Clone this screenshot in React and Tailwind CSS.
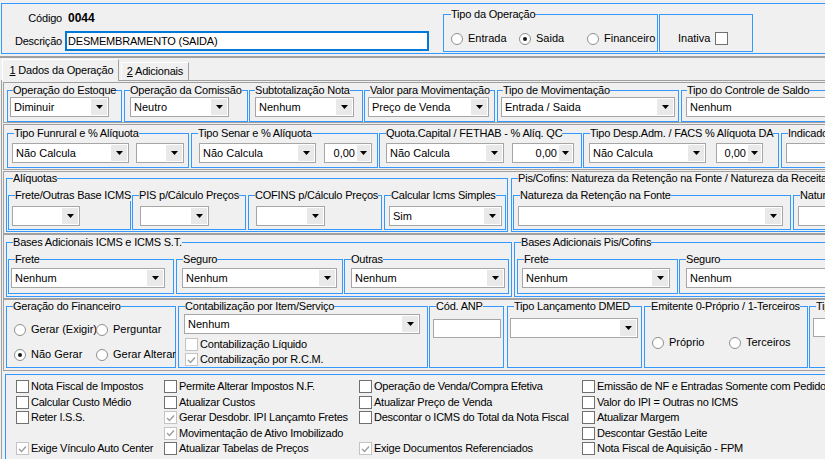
import React from "react";

function Arrow() {
  return (
    <svg width="7" height="4" viewBox="0 0 7 4">
      <path d="M0 0h7L3.5 4z" fill="#000" />
    </svg>
  );
}

// combobox look: white field, grey arrow button on the right
function Combo({ value = "", className = "", right = false }) {
  return (
    <div className={"flex h-[20px] shrink-0 items-center border border-[#a6a6a6] bg-white " + className}>
      <span className={"min-w-0 flex-1 overflow-hidden whitespace-nowrap pl-[3px] pr-[2px] " + (right ? "text-right" : "")}>
        {value}
      </span>
      <span className={"mr-[1px] flex h-[16px] shrink-0 items-center justify-center bg-[#e9e9e9] " + (right ? "w-[13px]" : "w-[16px]")}>
        <Arrow />
      </span>
    </div>
  );
}

function Field({ className = "" }) {
  return <div className={"shrink-0 border border-[#a6a6a6] bg-white " + className} />;
}

function Radio({ checked }) {
  return (
    <span className="flex h-[12px] w-[12px] shrink-0 items-center justify-center rounded-full border border-[#8f8f8f] bg-white">
      {checked && <span className="h-[4px] w-[4px] rounded-full bg-[#1a1a1a]" />}
    </span>
  );
}

function RadioItem({ label, checked, className = "" }) {
  return (
    <div className={"flex h-[13px] shrink-0 items-center gap-[5px] whitespace-nowrap " + className}>
      <Radio checked={checked} />
      <span>{label}</span>
    </div>
  );
}

function Check({ checked, disabled }) {
  return (
    <span
      className={
        "flex h-[13px] w-[13px] shrink-0 items-center justify-center border bg-white " +
        (disabled ? "border-[#c4c4c4]" : "border-[#707070]")
      }
    >
      {checked && (
        <svg width="9" height="8" viewBox="0 0 9 8">
          <path d="M1 4l2.5 2.5L8 1.5" fill="none" stroke={disabled ? "#9d9d9d" : "#222"} strokeWidth="1.4" />
        </svg>
      )}
    </span>
  );
}

// Delphi style group box
function Group({ title, className = "", legend = "ml-[6px]", children }) {
  return (
    <fieldset className={"min-w-0 shrink-0 border border-[#3399ff] " + className}>
      {title && <legend className={"whitespace-nowrap leading-[12px] tracking-[-0.2px] " + legend}>{title}</legend>}
      {children}
    </fieldset>
  );
}

const checks = [
  ["Nota Fiscal de Impostos"],
  ["Calcular Custo Médio"],
  ["Reter I.S.S."],
  null,
  ["Exige Vínculo Auto Center", true],
  ["Permite Alterar Impostos N.F."],
  ["Atualizar Custos"],
  ["Gerar Desdobr. IPI Lançamto Fretes", true],
  ["Movimentação de Ativo Imobilizado", true],
  ["Atualizar Tabelas de Preços"],
  ["Operação de Venda/Compra Efetiva"],
  ["Atualizar Preço de Venda"],
  ["Descontar o ICMS do Total da Nota Fiscal"],
  null,
  ["Exige Documentos Referenciados", true],
  ["Emissão de NF e Entradas Somente com Pedido"],
  ["Valor do IPI = Outras no ICMS"],
  ["Atualizar Margem"],
  ["Descontar Gestão Leite"],
  ["Nota Fiscal de Aquisição - FPM"],
];

export default function App() {
  return (
    <div className="h-[459px] w-[825px] overflow-hidden bg-[#f0f0f0] font-['Liberation_Sans',Arial,sans-serif] text-[11px] leading-[13px] text-black">
      {/* HEADER */}
      <div className="ml-[1px] mt-[3px] flex h-[51px] w-[840px] border border-[#3399ff]">
        <div className="w-[441px] shrink-0 pt-[7px] tracking-[-0.2px]">
          <div className="flex h-[14px] items-center">
            <span className="w-[60px] text-right">Código</span>
            <span className="ml-[6px] text-[12px] font-bold tracking-normal">0044</span>
          </div>
          <div className="mt-[6px] flex items-center">
            <span className="w-[60px] text-right">Descrição</span>
            <div className="ml-[3px] flex h-[20px] w-[364px] items-center border-2 border-[#0078d7] bg-white pl-[1px]">
              DESMEMBRAMENTO (SAIDA)
            </div>
          </div>
        </div>
        <Group title="Tipo da Operação" legend="ml-[7px]" className="mt-[4px] w-[215px] self-start">
          <div className="flex h-[31px] items-start pl-[7px] pt-[12px]">
            <RadioItem className="w-[68px]" label="Entrada" />
            <RadioItem className="w-[68px]" label="Saida" checked />
            <RadioItem label="Financeiro" />
          </div>
        </Group>
        <div className="ml-[1px] mt-[10px] h-[38px] w-[94px] shrink-0 border border-[#3399ff]">
          <div className="mt-[17px] flex h-[13px] items-center gap-[5px] pl-[18px]">
            <span>Inativa</span>
            <Check />
          </div>
        </div>
      </div>

      <div className="mt-[2px] h-[2px] w-full bg-[#a0a0a0]" />

      {/* TABS */}
      <div className="flex h-[22px] items-end pl-[2px]">
        <div className="relative z-10 -mb-px flex h-[22px] w-[117px] items-center justify-center border-l border-r border-t border-l-white border-r-[#a0a0a0] border-t-white bg-[#f0f0f0] pl-[2px] tracking-[-0.2px]">
          <span>
            <span className="underline">1</span> Dados da Operação
          </span>
        </div>
        <div className="ml-[2px] flex h-[18px] w-[68px] items-center justify-center border-l border-r border-t border-l-white border-r-[#a0a0a0] border-t-white tracking-[-0.2px]">
          <span>
            <span className="underline">2</span> Adicionais
          </span>
        </div>
      </div>

      <div className="ml-[1px] border-l border-t border-[#a0a0a0]">
        {/* ROW 1 */}
        <div className="ml-[1px] mt-[1px] flex w-[840px] border border-[#a0a0a0] pt-[1px]">
          <Group title="Operação do Estoque" legend="ml-[5px]" className="ml-[3px] w-[115px]">
            <div className="h-[25px] pl-[2px] pt-[1px]">
              <Combo value="Diminuir" className="w-[99px]" />
            </div>
          </Group>
          <Group title="Operação da Comissão" legend="ml-[5px]" className="ml-[2px] w-[124px]">
            <div className="h-[25px] pl-[5px] pt-[1px]">
              <Combo value="Neutro" className="w-[99px]" />
            </div>
          </Group>
          <Group title="Subtotalização Nota" legend="ml-[5px]" className="ml-[1px] w-[114px]">
            <div className="h-[25px] pl-[5px] pt-[1px]">
              <Combo value="Nenhum" className="w-[99px]" />
            </div>
          </Group>
          <Group title="Valor para Movimentação" legend="ml-[5px]" className="ml-[1px] w-[131px]">
            <div className="h-[25px] pl-[3px] pt-[1px]">
              <Combo value="Preço de Venda" className="w-[121px]" />
            </div>
          </Group>
          <Group title="Tipo de Movimentação" legend="ml-[5px]" className="ml-[2px] w-[182px]">
            <div className="h-[25px] pl-[3px] pt-[1px]">
              <Combo value="Entrada / Saida" className="w-[174px]" />
            </div>
          </Group>
          <Group title="Tipo do Controle de Saldo" legend="ml-[5px]" className="ml-[2px] w-[200px]">
            <div className="h-[25px] pl-[4px] pt-[1px]">
              <Combo value="Nenhum" className="w-[200px]" />
            </div>
          </Group>
        </div>

        {/* ROW 2 */}
        <div className="ml-[1px] mt-[1px] flex w-[840px] border border-[#a0a0a0] pb-[1px] pt-[2px]">
          <Group title="Tipo Funrural e % Alíquota" className="ml-[3px] w-[182px]">
            <div className="flex h-[28px] items-start pl-[4px] pt-[4px]">
              <Combo value="Não Calcula" className="w-[117px]" />
              <Combo className="ml-[7px] w-[48px]" />
            </div>
          </Group>
          <Group title="Tipo Senar e % Alíquota" className="ml-[2px] w-[187px]">
            <div className="flex h-[28px] items-start pl-[7px] pt-[4px]">
              <Combo value="Não Calcula" className="w-[117px]" />
              <Combo value="0,00" right className="ml-[8px] w-[48px]" />
            </div>
          </Group>
          <Group title="Quota.Capital / FETHAB - % Alíq. QC" className="ml-[1px] w-[203px]">
            <div className="flex h-[28px] items-start pl-[6px] pt-[4px]">
              <Combo value="Não Calcula" className="w-[118px]" />
              <Combo value="0,00" right className="ml-[8px] w-[62px]" />
            </div>
          </Group>
          <Group title="Tipo Desp.Adm. / FACS % Alíquota DA" className="ml-[1px] w-[196px]">
            <div className="flex h-[28px] items-start pl-[5px] pt-[4px]">
              <Combo value="Não Calcula" className="w-[117px]" />
              <Combo value="0,00" right className="ml-[10px] w-[47px]" />
            </div>
          </Group>
          <Group title="Indicador" className="ml-[2px] w-[100px]">
            <div className="h-[28px] pl-[4px] pt-[4px]">
              <Field className="h-[20px] w-[100px]" />
            </div>
          </Group>
        </div>

        {/* ROW 3 */}
        <div className="ml-[1px] mt-[1px] flex w-[840px] border border-[#a0a0a0] pb-[1px]">
          <Group title="Alíquotas" className="ml-[2px] w-[502px]">
            <div className="flex h-[47px] items-start pt-[5px]">
              <Group title="Frete/Outras Base ICMS" className="ml-[1px] w-[123px]">
                <div className="h-[28px] pl-[3px] pt-[5px]">
                  <Combo className="w-[68px]" />
                </div>
              </Group>
              <Group title="PIS p/Cálculo Preços" className="ml-[1px] w-[114px]">
                <div className="h-[28px] pl-[7px] pt-[5px]">
                  <Combo className="w-[69px]" />
                </div>
              </Group>
              <Group title="COFINS p/Cálculo Preços" className="ml-[2px] w-[134px]">
                <div className="h-[28px] pl-[7px] pt-[5px]">
                  <Combo className="w-[69px]" />
                </div>
              </Group>
              <Group title="Calcular Icms Simples" className="ml-[2px] w-[122px]">
                <div className="h-[28px] pl-[4px] pt-[5px]">
                  <Combo value="Sim" className="w-[113px]" />
                </div>
              </Group>
            </div>
          </Group>
          <Group title="Pis/Cofins: Natureza da Retenção na Fonte / Natureza da Receita" className="ml-[3px] w-[330px]">
            <div className="flex h-[47px] items-start pt-[5px]">
              <Group title="Natureza da Retenção na Fonte" className="ml-[1px] w-[278px]">
                <div className="h-[28px] pl-[4px] pt-[5px]">
                  <Combo className="w-[265px]" />
                </div>
              </Group>
              <Group title="Natureza da Receita" className="ml-[2px] w-[100px]">
                <div className="h-[28px] pl-[4px] pt-[5px]">
                  <Field className="h-[20px] w-[100px]" />
                </div>
              </Group>
            </div>
          </Group>
        </div>

        {/* ROW 4 */}
        <div className="ml-[1px] flex w-[840px] border border-[#a0a0a0] pb-[1px] pt-[1px]">
          <Group title="Bases Adicionais ICMS e ICMS S.T." className="ml-[2px] w-[506px]">
            <div className="flex h-[48px] items-start pt-[5px]">
              <Group title="Frete" className="ml-[1px] w-[166px]">
                <div className="h-[28px] pl-[2px] pt-[3px]">
                  <Combo value="Nenhum" className="w-[154px]" />
                </div>
              </Group>
              <Group title="Seguro" className="ml-[2px] w-[167px]">
                <div className="h-[28px] pl-[5px] pt-[3px]">
                  <Combo value="Nenhum" className="w-[155px]" />
                </div>
              </Group>
              <Group title="Outras" className="ml-[1px] w-[165px]">
                <div className="h-[28px] pl-[6px] pt-[3px]">
                  <Combo value="Nenhum" className="w-[154px]" />
                </div>
              </Group>
            </div>
          </Group>
          <Group title="Bases Adicionais Pis/Cofins" className="ml-[2px] w-[330px]">
            <div className="flex h-[48px] items-start pt-[5px]">
              <Group title="Frete" className="ml-[2px] w-[161px]">
                <div className="h-[28px] pl-[4px] pt-[3px]">
                  <Combo value="Nenhum" className="w-[148px]" />
                </div>
              </Group>
              <Group title="Seguro" className="ml-[1px] w-[160px]">
                <div className="h-[28px] pl-[6px] pt-[3px]">
                  <Combo value="Nenhum" className="w-[160px]" />
                </div>
              </Group>
            </div>
          </Group>
        </div>

        {/* ROW 5 */}
        <div className="ml-[1px] flex w-[840px] border border-[#a0a0a0] pb-[2px]">
          <Group title="Geração do Financeiro" className="ml-[2px] w-[170px]">
            <div className="h-[55px] pl-[7px] pt-[11px]">
              <div className="flex h-[13px]">
                <RadioItem className="w-[82px]" label="Gerar (Exigir)" />
                <RadioItem label="Perguntar" />
              </div>
              <div className="mt-[12px] flex h-[13px]">
                <RadioItem className="w-[82px]" label="Não Gerar" checked />
                <RadioItem label="Gerar Alterar" />
              </div>
            </div>
          </Group>
          <Group title="Contabilização por Item/Serviço" className="ml-[2px] w-[250px]">
            <div className="h-[55px] pl-[5px] pt-[2px]">
              <Combo value="Nenhum" className="w-[236px]" />
              <div className="ml-[1px] mt-[4px] flex h-[13px] items-center gap-[2px] tracking-[-0.2px]">
                <Check disabled />
                <span>Contabilização Líquido</span>
              </div>
              <div className="ml-[1px] mt-[2px] flex h-[13px] items-center gap-[2px] tracking-[-0.2px]">
                <Check checked disabled />
                <span>Contabilização por R.C.M.</span>
              </div>
            </div>
          </Group>
          <Group title="Cód. ANP" className="ml-[1px] w-[75px]">
            <div className="h-[55px] pl-[3px] pt-[7px]">
              <Field className="h-[19px] w-[68px]" />
            </div>
          </Group>
          <Group title="Tipo Lançamento DMED" className="ml-[3px] w-[135px]">
            <div className="h-[55px] pl-[2px] pt-[6px]">
              <Combo className="w-[128px]" />
            </div>
          </Group>
          <Group title="Emitente 0-Próprio / 1-Terceiros" className="ml-[2px] w-[164px]">
            <div className="flex h-[55px] pl-[7px] pt-[24px]">
              <RadioItem className="w-[77px]" label="Próprio" />
              <RadioItem label="Terceiros" />
            </div>
          </Group>
          <Group title="Tipo" className="ml-[1px] w-[100px]">
            <div className="h-[55px] pl-[3px] pt-[6px]">
              <Field className="h-[19px] w-[100px]" />
            </div>
          </Group>
        </div>

        {/* FLAGS */}
        <div className="ml-[3px] mt-[3px] h-[100px] w-[840px] border border-[#3399ff] pl-[10px] pt-[4px] tracking-[-0.25px]">
          <div className="grid grid-flow-col grid-cols-[148px_195px_223px_260px] grid-rows-[repeat(5,15.5px)]">
            {checks.map((c, i) =>
              c ? (
                <div key={i} className="flex items-center gap-[2px] whitespace-nowrap">
                  <Check checked={c[1]} disabled={c[1]} />
                  <span>{c[0]}</span>
                </div>
              ) : (
                <div key={i} />
              )
            )}
          </div>
        </div>
      </div>
    </div>
  );
}
